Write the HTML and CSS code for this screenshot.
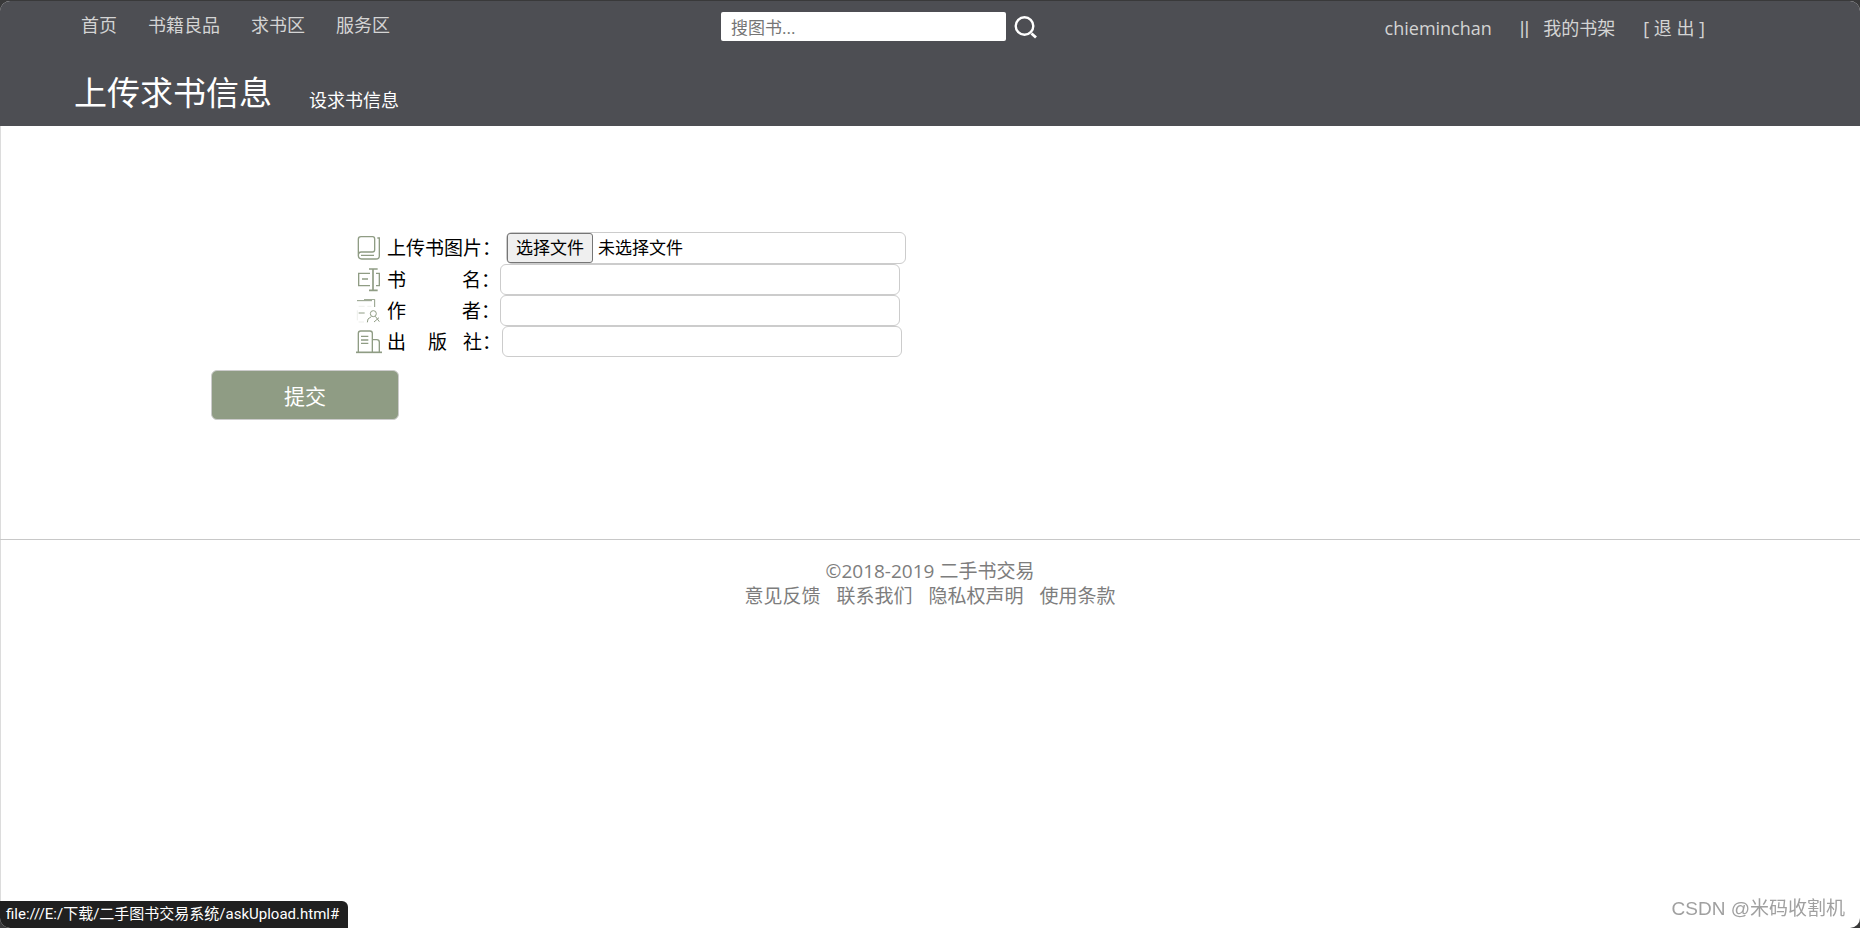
FILE: index.html
```html
<!DOCTYPE html>
<html lang="zh-CN">
<head>
<meta charset="utf-8">
<title>上传求书信息</title>
<link rel="stylesheet" href="styles.css">
</head>
<body>
<div class="page">
  <header class="header">
    <div class="topbar">
      <nav class="nav">
        <a href="#">首页</a>
        <a href="#">书籍良品</a>
        <a href="#">求书区</a>
        <a href="#">服务区</a>
      </nav>
      <form class="search">
        <input class="search-input" type="text" placeholder="搜图书..." aria-label="搜图书">
        <button class="search-button" type="button" aria-label="搜索">
          <svg width="24" height="24" viewBox="0 0 24 24" fill="none" stroke="#fff">
            <circle cx="10.5" cy="11" r="8.8" stroke-width="2.4"/>
            <path d="M17.5 18.5 22 22.5" stroke-width="2.8"/>
          </svg>
        </button>
      </form>
      <div class="account">
        <a class="user" href="#">chieminchan</a>
        <span class="divider">||</span>
        <a class="shelf" href="#">我的书架</a>
        <a class="logout" href="#">[ 退 出 ]</a>
      </div>
    </div>
    <div class="heading">
      <h1 class="title">上传求书信息</h1>
      <span class="subtitle">设求书信息</span>
    </div>
  </header>

  <main class="main">
    <form class="form">
      <div class="row row-file">
        <svg class="icon" viewBox="0 0 78 72">
          <path d="M7 60V10Q7 2 15 2H50Q56 2 56 9V41Q56 48 49 48H16Q7 48 7 58Q7 69 17 69H60Q70 69 70 60V6H64"/>
          <path d="M15 58H54"/>
        </svg>
        <label class="label" for="picture">上传书图片：</label>
        <div class="field file">
          <span class="file-button">选择文件</span>
          <span class="file-name">未选择文件</span>
          <input class="file-input" id="picture" type="file">
        </div>
      </div>
      <div class="row">
        <svg class="icon" viewBox="0 0 78 72">
          <path d="M42 16H8V53H42M18 33H36"/>
          <path d="M60 16H70V53H60"/>
          <path d="M51 3V68M39 3H65M39 67H65" stroke-width="5"/>
        </svg>
        <label class="label spread" for="name"><span>书</span><span>名：</span></label>
        <input class="field" id="name" type="text">
      </div>
      <div class="row">
        <svg class="icon" viewBox="0 0 78 72">
          <path d="M3 5H48M24 1H56V24" stroke-width="3"/>
          <path d="M8 22H26M34 22H46M8 69H24M4 34V64" stroke-width="1" opacity=".5"/>
          <path d="M8 42H26" stroke-width="3"/>
          <circle cx="52" cy="44" r="9" stroke-width="3"/>
          <path d="M46 53 36 60 34 70M58 52 70 68M69 56 54 69" stroke-width="3"/>
        </svg>
        <label class="label spread" for="author"><span>作</span><span>者：</span></label>
        <input class="field" id="author" type="text">
      </div>
      <div class="row">
        <svg class="icon" viewBox="0 0 78 72">
          <path d="M7 66V10Q7 3 14 3H42Q49 3 49 10V66M49 29H62Q70 29 70 37V66"/>
          <path d="M15 19H37M15 30H37M15 40H37"/>
          <path d="M0 67H78" stroke-width="5"/>
        </svg>
        <label class="label press" for="press"><span>出</span><span>版</span><span>社：</span></label>
        <input class="field" id="press" type="text">
      </div>
      <button class="submit" type="button">提交</button>
    </form>
  </main>

  <footer class="footer">
    <div>©2018-2019 二手书交易</div>
    <div class="links">
      <a href="#">意见反馈</a>
      <a href="#">联系我们</a>
      <a href="#">隐私权声明</a>
      <a href="#">使用条款</a>
    </div>
  </footer>
</div>
<div class="status">file:///E:/下载/二手图书交易系统/askUpload.html#</div>
<div class="watermark">CSDN @米码收割机</div>
</body>
</html>
```
FILE: styles.css
```css
* { box-sizing: border-box; }

html { background: #39393a; }

body {
  margin: 0;
  padding-top: 1px;
  font-family: "Open Sans", "Noto Sans CJK SC", sans-serif;
  font-size: 18px;
}

a { color: inherit; text-decoration: none; }

input, button { font-family: inherit; }

.page {
  min-height: calc(100vh - 1px);
  background: #fff linear-gradient(#dcdcdc, #dcdcdc) left / 1px 100% no-repeat;
  border-radius: 10px;
  overflow: hidden;
}

.header {
  height: 125px;
  padding-left: 74px;
  background: #4d4e53;
  color: #d4d4d4;
}

.topbar {
  display: flex;
  align-items: flex-start;
  height: 68px;
}

.nav {
  display: flex;
  gap: 31px;
  width: 647px;
  padding: 11px 0 0 7px;
  line-height: 26px;
}

.search {
  display: flex;
  align-items: center;
  gap: 8px;
  padding-top: 11px;
}

.search-input {
  width: 285px;
  height: 29px;
  padding: 2px 10px 0;
  border: 0;
  border-radius: 2px;
  background: #fff;
  font-size: 17px;
}

.search-input::placeholder { color: #757575; }

.search-button {
  display: flex;
  padding: 0;
  border: 0;
  background: none;
}

.account {
  display: flex;
  margin-left: auto;
  padding: 14px 155px 0 0;
  line-height: 26px;
}

.user { margin-right: 28px; }
.divider {
  margin-right: 14px;
  font-family: "Liberation Sans", sans-serif;
}
.shelf { margin-right: 28px; }

.heading {
  display: flex;
  align-items: flex-end;
  gap: 37px;
  color: #fff;
}

.title {
  margin: 0;
  font-size: 33px;
  font-weight: 400;
  line-height: 48px;
}

.subtitle { line-height: 34px; }

.main {
  padding: 106px 0 119px 211px;
  border-bottom: 1px solid #c8c8c8;
}

.row {
  display: flex;
  align-items: center;
  height: 31px;
  margin-left: 145px;
}

.row-file { height: 32px; }

.icon {
  width: 26px;
  height: 24px;
  margin-right: 5px;
  fill: none;
  stroke: #8f9c84;
  stroke-width: 4;
}

.label {
  width: 113px;
  font-size: 19px;
  line-height: 28px;
  white-space: nowrap;
}

.spread {
  display: flex;
  justify-content: space-between;
}

.press {
  display: flex;
  gap: 16px;
  width: 115px;
}

.press span:first-child { margin-right: 6px; }

.field {
  width: 400px;
  height: 100%;
  border: 1px solid #ccc;
  border-radius: 6px;
  background: #fff;
  font-size: 17px;
}

.file {
  position: relative;
  display: flex;
  align-items: center;
  gap: 5px;
  margin-left: 6px;
}

.file-button {
  height: 30px;
  padding: 0 8px;
  border: 1px solid #767676;
  border-radius: 3px;
  background: #efefef;
  line-height: 28px;
}

.file-name { line-height: 28px; }

.file-input {
  position: absolute;
  inset: 0;
  width: 100%;
  opacity: 0;
}

.submit {
  display: block;
  width: 188px;
  height: 50px;
  margin-top: 13px;
  border: 1px solid #ccc;
  border-radius: 6px;
  background: #8f9c84;
  color: #fff;
  font-size: 21px;
}

.footer {
  padding-top: 19px;
  color: #7d7d7d;
  font-size: 19px;
  line-height: 25px;
  text-align: center;
}

.links {
  display: flex;
  justify-content: center;
  gap: 16px;
}

.status {
  position: fixed;
  left: 0;
  bottom: 0;
  height: 27px;
  padding: 0 9px 0 6px;
  border-radius: 0 6px 0 10px;
  background: #202020;
  color: #fff;
  font-family: Roboto, "Noto Sans CJK SC", sans-serif;
  font-size: 15px;
  line-height: 27px;
}

.watermark {
  position: fixed;
  right: 15px;
  bottom: 4px;
  color: #a0a0a0;
  font-family: "Liberation Sans", "Noto Sans CJK SC", sans-serif;
  font-size: 19px;
  line-height: 30px;
}
```
